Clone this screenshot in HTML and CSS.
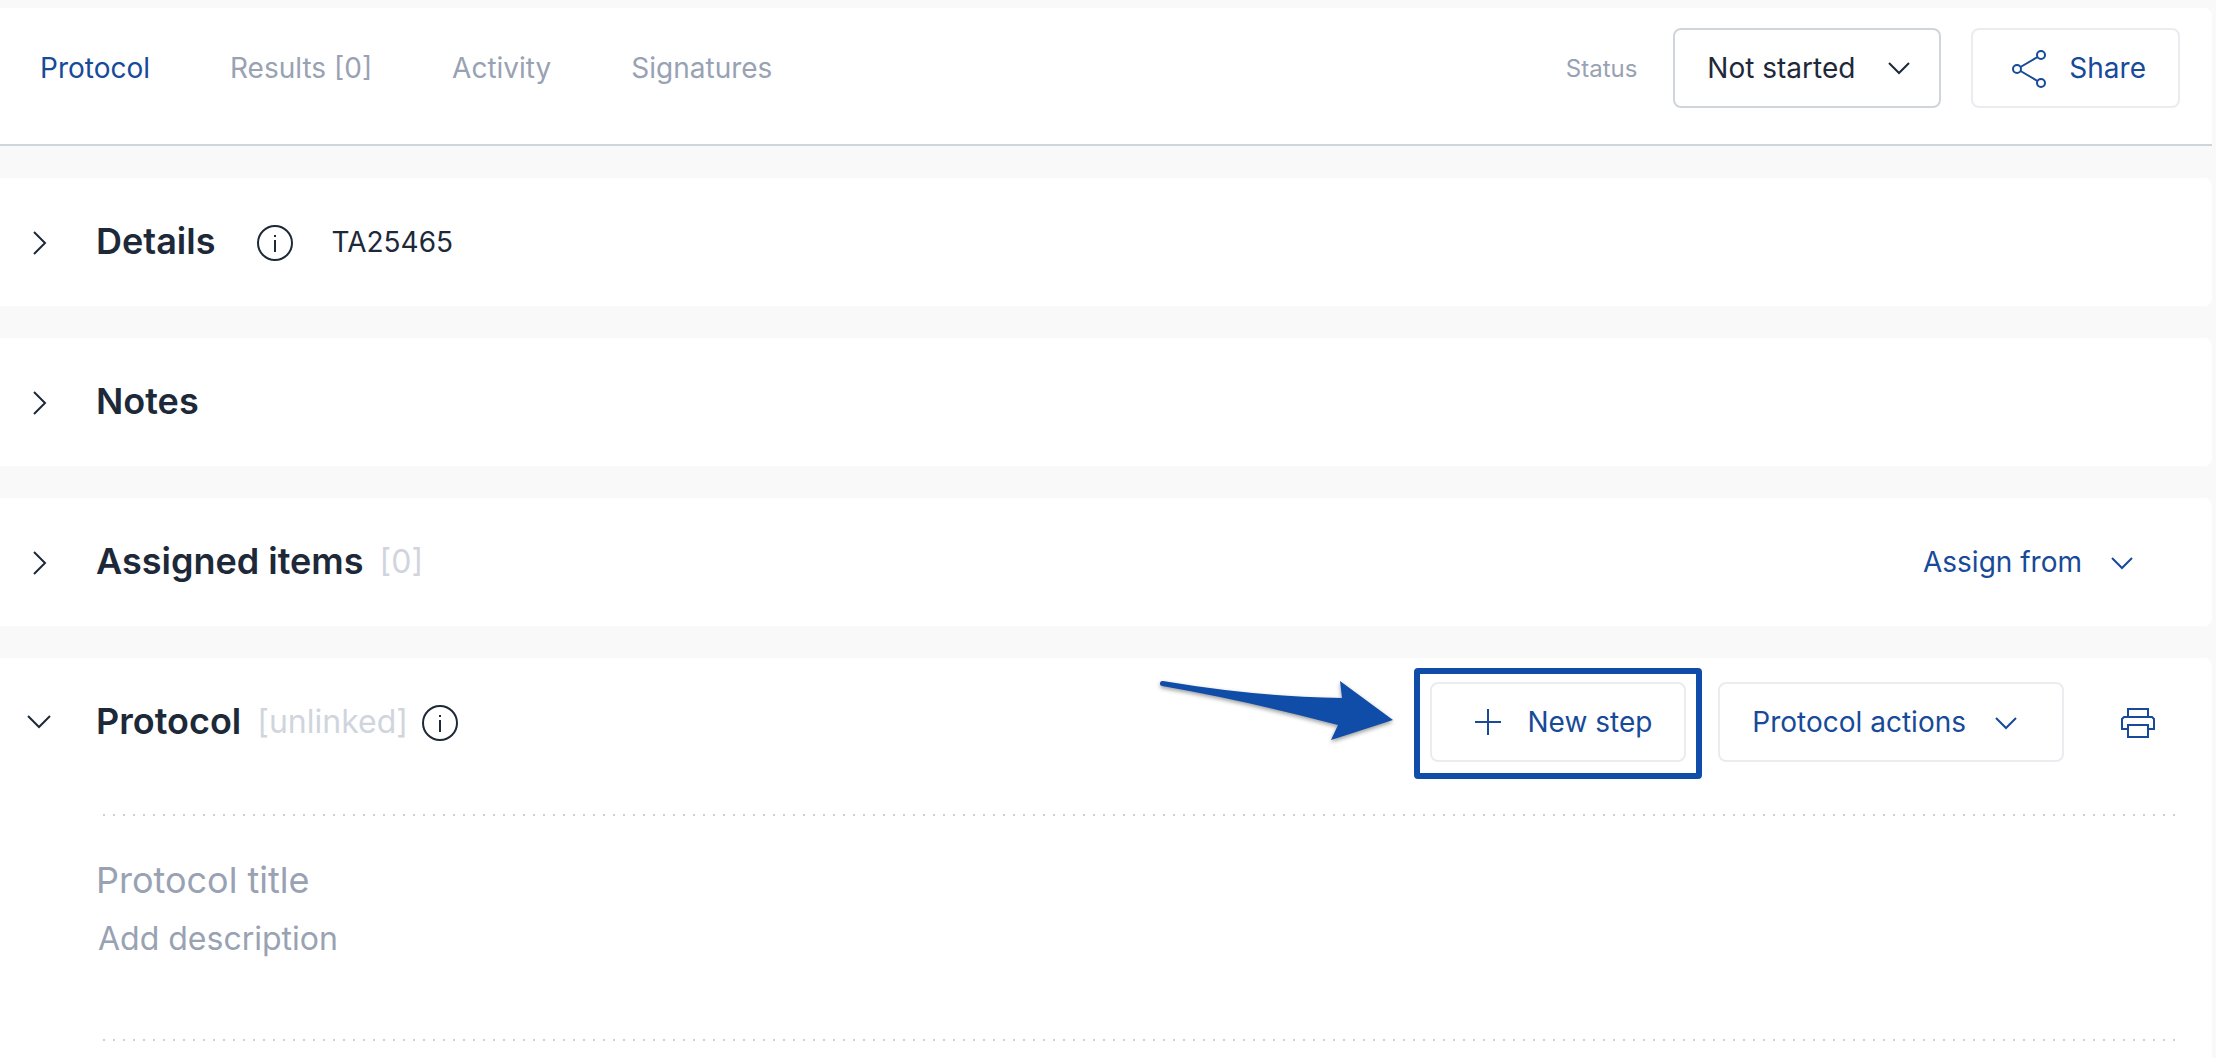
FILE: index.html
```html
<!DOCTYPE html>
<html lang="en">
<head>
    <meta charset="utf-8">
    <title>Protocol</title>
    <link rel="stylesheet" href="styles.css">
</head>
<body>

<div class="page">
    <header class="topbar">
        <nav class="tabs">
            <a class="tab active" href="#protocol">Protocol</a>
            <a class="tab" href="#results">Results [0]</a>
            <a class="tab" href="#activity">Activity</a>
            <a class="tab" href="#signatures">Signatures</a>
        </nav>
        <div class="topbar-actions">
            <label class="status-label" for="status">Status</label>
            <div class="select-wrap">
                <select class="status-select" id="status">
                    <option>Not started</option>
                    <option>In progress</option>
                    <option>Completed</option>
                </select>
                <svg class="icon select-icon" viewBox="0 0 48 48"><path d="M14 19l10 10 10-10"/></svg>
            </div>
            <button class="btn" type="button">
                <svg class="icon" viewBox="0 0 48 48">
                    <circle cx="12" cy="25" r="4"/>
                    <circle cx="36" cy="11" r="4"/>
                    <circle cx="36" cy="39" r="4"/>
                    <path d="M15.500 23l17-10M15.500 27l17 10"/>
                </svg>
                Share
            </button>
        </div>
    </header>

    <section class="card">
        <div class="card-header">
            <button class="toggle" type="button" aria-label="Expand details">
                <svg class="icon" viewBox="0 0 48 48"><path d="M18 14l11 11-11 11"/></svg>
            </button>
            <h2 class="details-title">Details</h2>
            <svg class="icon info" viewBox="0 0 48 48"><circle cx="24" cy="25" r="17"/><path d="M24 22v12M24 17v2"/></svg>
            <span class="code">TA25465</span>
        </div>
    </section>

    <section class="card">
        <div class="card-header">
            <button class="toggle" type="button" aria-label="Expand notes">
                <svg class="icon" viewBox="0 0 48 48"><path d="M18 14l11 11-11 11"/></svg>
            </button>
            <h2>Notes</h2>
        </div>
    </section>

    <section class="card">
        <div class="card-header">
            <button class="toggle" type="button" aria-label="Expand assigned items">
                <svg class="icon" viewBox="0 0 48 48"><path d="M18 14l11 11-11 11"/></svg>
            </button>
            <h2>Assigned items</h2>
            <span class="note">[0]</span>
            <div class="card-actions">
                <button class="btn btn-plain" type="button">
                    Assign from
                    <svg class="icon" viewBox="0 0 48 48"><path d="M14 20l10 10 10-10"/></svg>
                </button>
            </div>
        </div>
    </section>

    <section class="card card-last" id="protocol">
        <div class="card-header">
            <button class="toggle" type="button" aria-label="Collapse protocol">
                <svg class="icon" viewBox="0 0 48 48"><path d="M12 18l11 11 11-11"/></svg>
            </button>
            <h2>Protocol</h2>
            <span class="note">[unlinked]</span>
            <svg class="icon info" viewBox="0 0 48 48"><circle cx="24" cy="25" r="17"/><path d="M24 22v12M24 17v2"/></svg>
            <div class="card-actions">
                <div class="highlight">
                    <!-- arrow pointing at the new step button -->
                    <svg class="arrow" viewBox="0 0 240 66">
                        <path d="M5 3Q100 19 184 20L182 3 235 42 173 62 180 47Q90 23 4 8A2.500 2.500 0 0 1 5 3z"/>
                    </svg>
                    <button class="btn" type="button">
                        <svg class="icon" viewBox="0 0 48 48"><path d="M24 11v26M11 24h26"/></svg>
                        New step
                    </button>
                </div>
                <button class="btn" type="button">
                    Protocol actions
                    <svg class="icon" viewBox="0 0 48 48"><path d="M14 20l10 10 10-10"/></svg>
                </button>
                <button class="btn btn-plain btn-icon" type="button" aria-label="Print">
                    <svg class="icon" viewBox="0 0 48 48">
                        <path d="M14 19v-8h20v8M14 31H8V21l2-2h28l2 2v10h-6M14 27h20v12H14z"/>
                    </svg>
                </button>
            </div>
        </div>
        <div class="card-body">
            <input class="title-input" type="text" placeholder="Protocol title" aria-label="Protocol title">
            <input class="desc-input" type="text" placeholder="Add description" aria-label="Add description">
        </div>
    </section>
</div>

</body>
</html>
```
FILE: styles.css
```css
* {
    box-sizing: border-box;
}
body {
    margin: 0;
    background-color: #f9f9f9;
    color: #1d2939;
    font-family: Inter, "Liberation Sans", sans-serif;
    font-size: 28px;
}
.page {
    display: flex;
    flex-direction: column;
    gap: 32px;
    min-height: 100vh;
    padding: 8px 4px 0 0;
}
.topbar {
    display: flex;
    justify-content: space-between;
    align-items: flex-start;
    padding: 20px 32px 36px 40px;
    background-color: #fff;
    border-bottom: 2px solid #d0d5dd;
    border-top-right-radius: 8px;
}
.tabs {
    display: flex;
    gap: 80px;
}
.tab {
    line-height: 80px;
    color: #98a2b3;
    text-decoration: none;
}
.tab.active {
    color: #174a98;
}
.topbar-actions {
    display: flex;
    align-items: center;
}
.status-label {
    margin-right: 36px;
    font-size: 24px;
    color: #98a2b3;
}
.select-wrap {
    position: relative;
    margin-right: 30px;
}
.status-select {
    appearance: none;
    width: 268px;
    height: 80px;
    padding: 0 64px 0 32px;
    border: 2px solid #d0d5dd;
    border-radius: 8px;
    background-color: #fff;
    color: #1d2939;
    font: inherit;
}
.icon {
    flex: none;
    display: block;
    width: 48px;
    height: 48px;
    fill: none;
    stroke: currentColor;
    stroke-width: 2;
}
.select-icon {
    position: absolute;
    top: 16px;
    right: 18px;
    pointer-events: none;
}
.btn {
    display: flex;
    align-items: center;
    gap: 16px;
    height: 80px;
    padding: 0 32px;
    border: 2px solid #eaecf0;
    border-radius: 8px;
    background-color: #fff;
    color: #174a98;
    font: inherit;
    white-space: nowrap;
}
.btn-plain {
    border-color: transparent;
    background-color: transparent;
}
.btn-icon {
    padding: 0 16px;
}
.card {
    background-color: #fff;
    border-radius: 0 8px 8px 0;
}
.card-last {
    flex: 1;
    border-radius: 0 8px 0 0;
}
.card-header {
    display: flex;
    align-items: center;
    height: 128px;
    padding: 0 32px 0 16px;
}
.toggle {
    margin-right: 32px;
    padding: 0;
    border: none;
    background: none;
    color: inherit;
}
h2 {
    margin: 0;
    padding-bottom: 2px;
    font-size: 36px;
    font-weight: 600;
}
.details-title {
    margin-right: 36px;
}
.code {
    margin-left: 32px;
}
.note {
    margin: 0 8px 0 16px;
    padding-bottom: 2px;
    font-size: 32px;
    color: #d0d5dd;
}
.card-actions {
    display: flex;
    gap: 32px;
    margin-left: auto;
}
.highlight {
    position: relative;
}
.highlight::after {
    content: "";
    position: absolute;
    inset: -14px -16px -17px -16px;
    border: 6px solid #104da9;
    border-radius: 4px;
    pointer-events: none;
}
.arrow {
    position: absolute;
    top: -4px;
    right: 288px;
    width: 240px;
    height: 66px;
    overflow: visible;
    fill: #104da9;
    filter: drop-shadow(0 2px 2px rgba(0, 0, 0, 0.4));
}
.card-body {
    position: relative;
    display: flex;
    flex-direction: column;
    gap: 8px;
    margin: 28px 32px 0 96px;
    padding: 44px 0 75px;
}
/* dotted rules above and below the step fields */
.card-body::before,
.card-body::after {
    content: "";
    position: absolute;
    left: 2px;
    right: 0;
    height: 2px;
    background: repeating-linear-gradient(to right, transparent 0 5px, #d0d0d0 5px 7px, transparent 7px 10px);
}
.card-body::before {
    top: 0;
}
.card-body::after {
    bottom: 0;
}
.title-input,
.desc-input {
    width: 100%;
    padding: 0;
    border: none;
    outline: none;
    background: none;
    color: #1d2939;
    font-family: inherit;
}
.title-input {
    height: 44px;
    font-size: 36px;
}
.desc-input {
    height: 56px;
    padding-left: 2px;
    font-size: 32px;
}
.title-input::placeholder,
.desc-input::placeholder {
    color: #98a2b3;
}
```
